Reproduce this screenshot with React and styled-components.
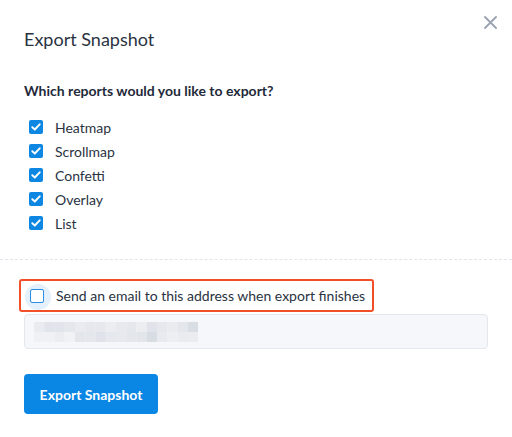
import React from 'react';
import styled, { createGlobalStyle } from 'styled-components';

const GlobalStyle = createGlobalStyle`
  html, body {
    margin: 0;
    padding: 0;
    background: #ffffff;
  }
  body {
    font-family: Lato, 'Liberation Sans', sans-serif;
    color: #2a3342;
  }
`;

const Dialog = styled.div`
  position: relative;
  width: 512px;
  height: 437px;
  background: #ffffff;
  overflow: hidden;
`;

const CloseButton = styled.button`
  position: absolute;
  top: 13px;
  right: 13px;
  width: 18px;
  height: 18px;
  padding: 0;
  border: none;
  background: none;
  cursor: pointer;
  display: flex;
  align-items: center;
  justify-content: center;
`;

const Header = styled.div`
  padding: 27px 24px 0;
`;

const Title = styled.h2`
  margin: 0;
  font-size: 18px;
  line-height: 24px;
  font-weight: 400;
  color: #2a3342;
`;

const Section = styled.div`
  padding: 0 24px;
`;

const Question = styled.p`
  margin: 30px 0 14px;
  font-size: 14px;
  line-height: 20px;
  font-weight: 700;
  color: #1f2a3a;
`;

const OptionList = styled.div`
  display: flex;
  flex-direction: column;
  padding-bottom: 24px;
`;

const OptionRow = styled.label`
  display: flex;
  align-items: center;
  gap: 12px;
  height: 24px;
  padding-left: 5px;
  font-size: 14px;
  color: #2a3342;
  cursor: pointer;
`;

const Box = styled.span`
  position: relative;
  flex: none;
  width: 14px;
  height: 14px;
  box-sizing: border-box;
  border-radius: 2px;
  display: flex;
  align-items: center;
  justify-content: center;
  background: ${p => (p.checked ? '#0d87e2' : '#ffffff')};
  border: ${p => (p.checked ? 'none' : '1.5px solid #2a8ee6')};

  &::before {
    content: '';
    display: ${p => (p.halo ? 'block' : 'none')};
    position: absolute;
    left: -6px;
    top: -6px;
    width: 26px;
    height: 26px;
    border-radius: 50%;
    background: #e4f0fb;
    z-index: -1;
  }
`;

const Divider = styled.hr`
  margin: 0;
  border: none;
  border-top: 1px dashed #e1e4ea;
`;

const Footer = styled.div`
  padding: 19px 24px 0 19px;
  display: flex;
  flex-direction: column;
  align-items: flex-start;
`;

const Highlight = styled.div`
  display: inline-flex;
  align-items: center;
  box-sizing: border-box;
  height: 33px;
  padding: 0 7px 0 9px;
  border: 2px solid #f24e28;
  border-radius: 3px;
  position: relative;
  z-index: 0;
`;

const EmailLabel = styled.label`
  display: flex;
  align-items: center;
  gap: 12px;
  font-size: 14px;
  color: #2a3342;
  white-space: nowrap;
`;

const EmailInput = styled.div`
  box-sizing: border-box;
  width: 464px;
  height: 35px;
  margin: 2px 0 0 5px;
  padding: 0 9px;
  display: flex;
  align-items: center;
  border: 1px solid #e3e7ee;
  border-radius: 4px;
  background: #f5f7fb;
`;

const PrimaryButton = styled.button`
  margin: 25px 0 0 5px;
  width: 134px;
  height: 40px;
  border: none;
  border-radius: 4px;
  background: #0a86e4;
  color: #ffffff;
  font-family: Lato, 'Liberation Sans', sans-serif;
  font-size: 14px;
  font-weight: 700;
  cursor: pointer;
`;

const Check = () => (
  <svg width="10" height="8" viewBox="0 0 10 8">
    <path d="M1.3 4.2 L3.8 6.5 L8.7 1.3" fill="none" stroke="#fff" strokeWidth="1.9" strokeLinecap="round" strokeLinejoin="round" />
  </svg>
);

const Checkbox = ({ checked, halo }) => (
  <Box checked={checked} halo={halo}>
    {checked && <Check />}
  </Box>
);

// pixelated blur over the pre-filled address
const mosaic = [
  ['#e8ebf0', '#e1e4ea', '#e1e4ea', '#e4e7ec', '#e9ebf0', '#e6e8ee', '#e6e8ee', '#ebedf1', '#e7e9ee', '#e4e7ec', '#ebedf1', '#e0e3e9', '#e6e8ed', '#e9ebef', '#e3e6eb', '#d9dde4'],
  ['#eff1f4', '#eff1f4', '#ebedf1', '#f0f2f5', '#e3e6eb', '#e4e7ec', '#dfe2e8', '#e5e8ed', '#e6e9ee', '#e3e6eb', '#e2e5ea', '#d8dce3', '#e8eaef', '#eceef2', '#e9ebf0', '#eaecf0'],
];

const Mosaic = () => (
  <svg width="164" height="20" viewBox="0 0 164 20">
    {mosaic.map((row, r) =>
      row.map((c, i) => <rect key={`${r}-${i}`} x={i * 10.25} y={r * 10} width="10.3" height="10" fill={c} />)
    )}
  </svg>
);

const reports = ['Heatmap', 'Scrollmap', 'Confetti', 'Overlay', 'List'];

export default function App() {
  return (
    <>
      <GlobalStyle />
      <Dialog>
        <CloseButton aria-label="Close">
          <svg width="13" height="13" viewBox="0 0 13 13">
            <path d="M1 1 L12 12 M12 1 L1 12" stroke="#9aa2b1" strokeWidth="1.8" strokeLinecap="round" />
          </svg>
        </CloseButton>
        <Header>
          <Title>Export Snapshot</Title>
        </Header>
        <Section>
          <Question>Which reports would you like to export?</Question>
          <OptionList>
            {reports.map(name => (
              <OptionRow key={name}>
                <Checkbox checked />
                {name}
              </OptionRow>
            ))}
          </OptionList>
        </Section>
        <Divider />
        <Footer>
          <Highlight>
            <EmailLabel>
              <Checkbox halo />
              Send an email to this address when export finishes
            </EmailLabel>
          </Highlight>
          <EmailInput>
            <Mosaic />
          </EmailInput>
          <PrimaryButton>Export Snapshot</PrimaryButton>
        </Footer>
      </Dialog>
    </>
  );
}
